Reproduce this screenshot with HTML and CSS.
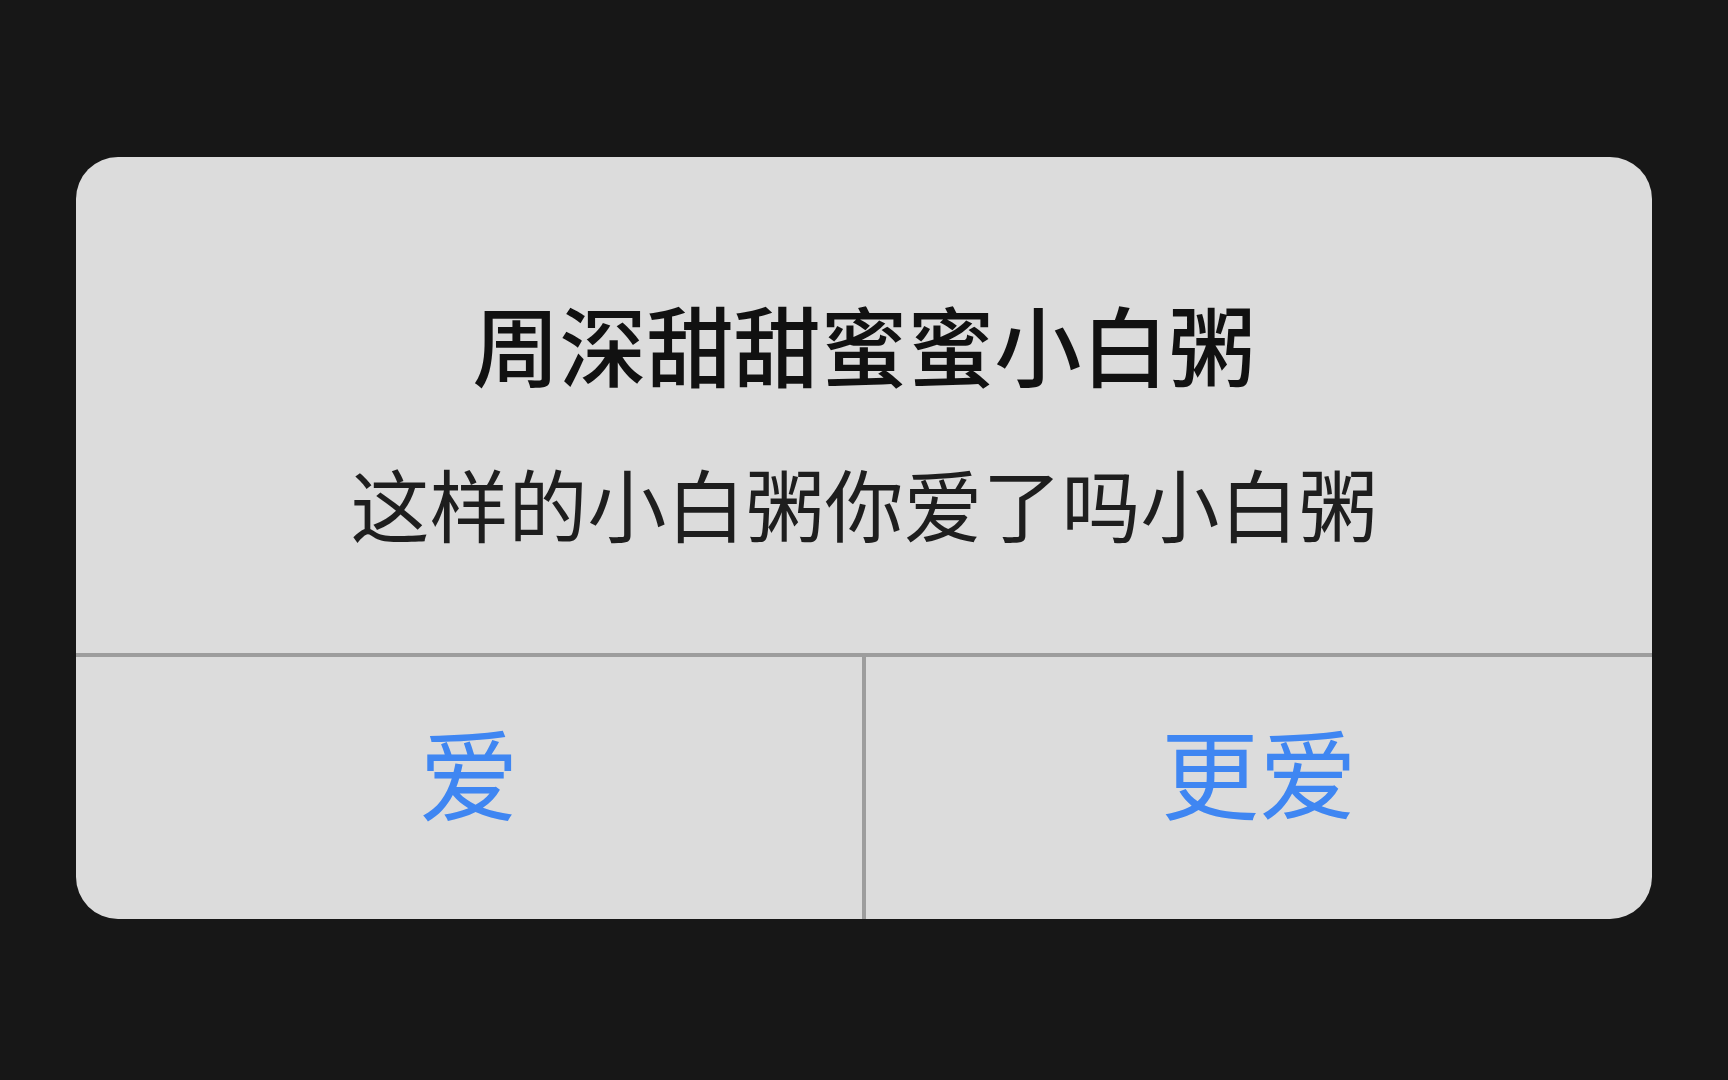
FILE: index.html
```html
<!DOCTYPE html>
<html lang="zh-CN">
<head>
<meta charset="utf-8">
<title>小白粥</title>
<link rel="stylesheet" href="styles.css">
</head>
<body>
  <div class="stage">
    <div class="alert">
      <div class="alert-body">
        <div class="alert-title">周深甜甜蜜蜜小白粥</div>
        <div class="alert-message">这样的小白粥你爱了吗小白粥</div>
      </div>
      <div class="alert-actions">
        <div class="alert-btn alert-btn-left">爱</div>
        <div class="alert-sep"></div>
        <div class="alert-btn alert-btn-right">更爱</div>
      </div>
    </div>
  </div>
</body>
</html>
```

FILE: styles.css
```css
html, body {
  margin: 0;
  padding: 0;
  background: #171717;
}

body {
  width: 1728px;
  height: 1080px;
  overflow: hidden;
  font-family: "Noto Sans CJK SC", "Noto Sans", sans-serif;
}

.stage {
  padding: 157px 76px 0 76px;
}

.alert {
  width: 1576px;
  height: 762px;
  background: #dcdcdc;
  border-radius: 42px;
  overflow: hidden;
  display: flex;
  flex-direction: column;
}

.alert-body {
  height: 500px;
  box-sizing: border-box;
  padding-top: 143px;
  display: flex;
  flex-direction: column;
  align-items: center;
  gap: 76px;
  border-bottom: 4px solid #9d9d9d;
}

.alert-title {
  font-size: 87px;
  line-height: 87px;
  font-weight: 500;
  color: #111111;
  white-space: nowrap;
}

.alert-message {
  font-size: 79px;
  line-height: 79px;
  font-weight: 400;
  color: #1e1e1e;
  white-space: nowrap;
}

.alert-actions {
  flex: 1;
  display: flex;
}

.alert-btn {
  flex: 1;
  display: flex;
  justify-content: center;
  align-items: flex-start;
  color: #3f86f2;
  white-space: nowrap;
}

.alert-btn-left {
  padding-top: 64px;
  font-size: 100px;
  line-height: 100px;
}

.alert-btn-right {
  padding-top: 63px;
  font-size: 98px;
  line-height: 98px;
}

.alert-sep {
  width: 4px;
  background: #9d9d9d;
}
```
